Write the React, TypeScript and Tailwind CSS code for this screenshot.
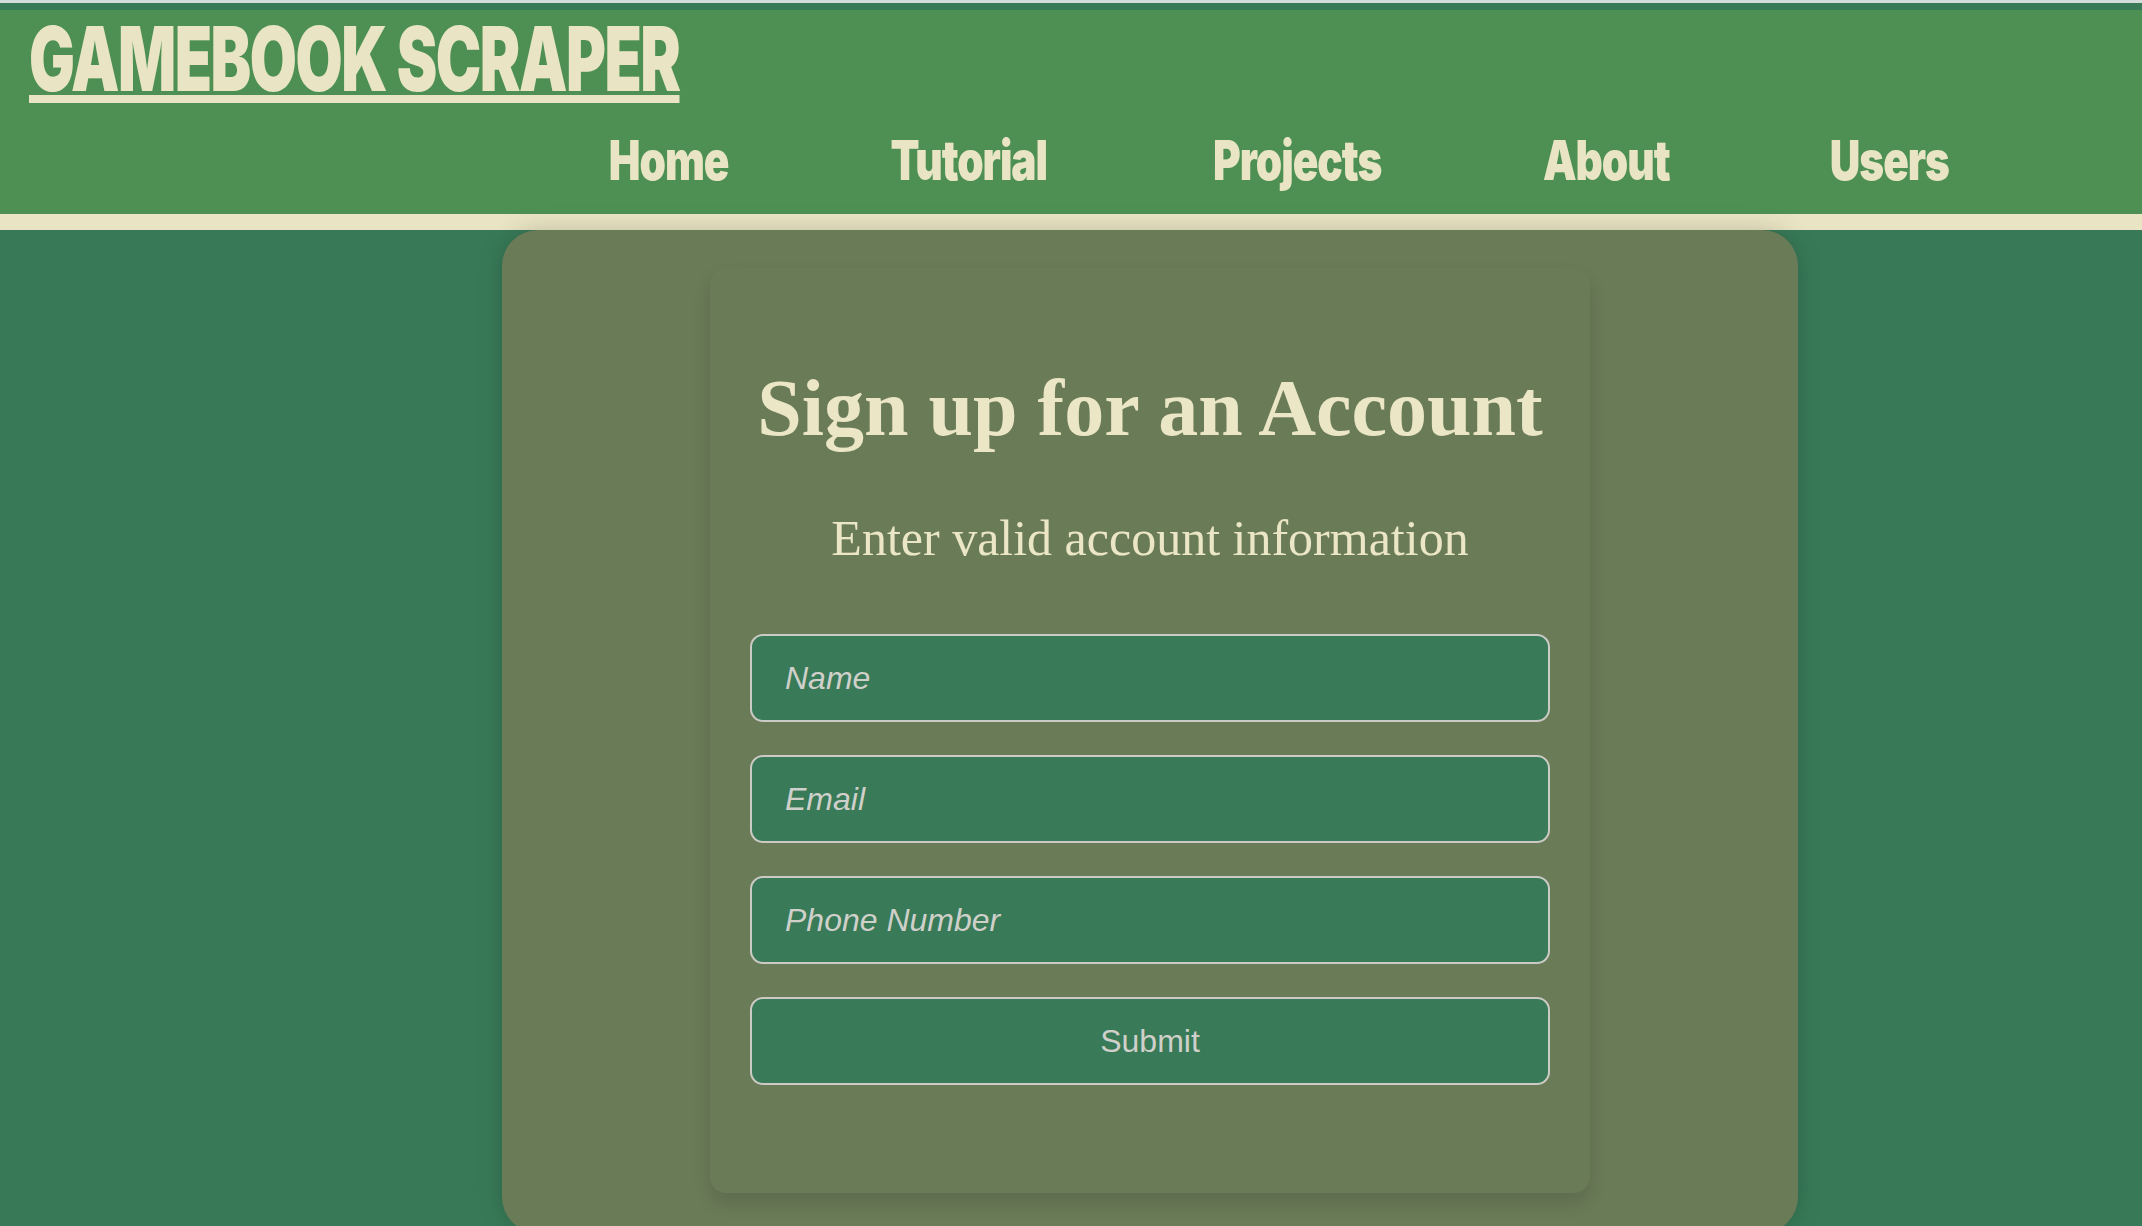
import React from 'react';

const navLinks = [
    { label: 'Home', w: 'w-[115px]' },
    { label: 'Tutorial', w: 'w-[160px]' },
    { label: 'Projects', w: 'w-[171px]' },
    { label: 'About', w: 'w-[121px]' },
    { label: 'Users', w: 'w-[118px]' },
];

const fields = ['Name', 'Email', 'Phone Number'];

export default function App() {
    return (
        <div className="h-[1226px] w-full overflow-hidden bg-[#387a58]">
            <div className="h-[3px] bg-[#d6dcd9]" />
            <div className="h-[7px]" />

            <header className="h-[220px] bg-[#4e9054] border-b-[16px] border-[#e9e5c4] text-[#e9e5c4] font-['Inter',sans-serif] font-black">
                <div className="pt-[4px] pl-[29px]">
                    <a href="#" className="inline-block origin-left scale-x-[0.685] text-[89px] leading-none tracking-tight underline decoration-[8px] underline-offset-[4px]">
                        GAMEBOOK SCRAPER
                    </a>
                </div>
                <nav className="flex gap-[163px] pl-[611px] mt-[30px]">
                    {navLinks.map((link) => (
                        <a key={link.label} href="#" className={`${link.w} flex justify-center`}>
                            <span className="inline-block scale-x-[0.77] text-[55px] leading-none tracking-tight whitespace-nowrap">
                                {link.label}
                            </span>
                        </a>
                    ))}
                </nav>
            </header>

            <main className="ml-[502px] w-[1296px] rounded-[36px] bg-[#6a7b58] pt-[38px] pb-[40px] shadow-[0_0_24px_rgba(0,0,0,0.18)]">
                <div className="mx-auto w-[880px] rounded-2xl bg-[#6a7b58] px-[40px] pt-[100px] pb-[108px] shadow-[0_10px_18px_rgba(0,0,0,0.12)]">
                    <h1 className="text-center font-['Liberation_Serif',serif] text-[80px] font-bold leading-none text-[#ebe6c5]">
                        Sign up for an Account
                    </h1>
                    <p className="mt-[65px] text-center font-['Liberation_Serif',serif] text-[50px] leading-none text-[#ebe6c5]">
                        Enter valid account information
                    </p>

                    <form className="mt-[71px] flex flex-col gap-[33px] font-['Liberation_Sans',sans-serif]" onSubmit={(e) => e.preventDefault()}>
                        {fields.map((f) => (
                            <input
                                key={f}
                                type="text"
                                placeholder={f}
                                className="h-[88px] w-full rounded-[13px] border-2 border-[#cbcac4] bg-[#397a58] px-[33px] text-[32px] text-[#d0d0ca] outline-none placeholder:italic placeholder:text-[#cfd0ca]"
                            />
                        ))}
                        <button type="submit" className="h-[88px] w-full rounded-[13px] border-2 border-[#cbcac4] bg-[#397a58] text-[32px] text-[#d0d0ca]">
                            Submit
                        </button>
                    </form>
                </div>
            </main>
        </div>
    );
}
